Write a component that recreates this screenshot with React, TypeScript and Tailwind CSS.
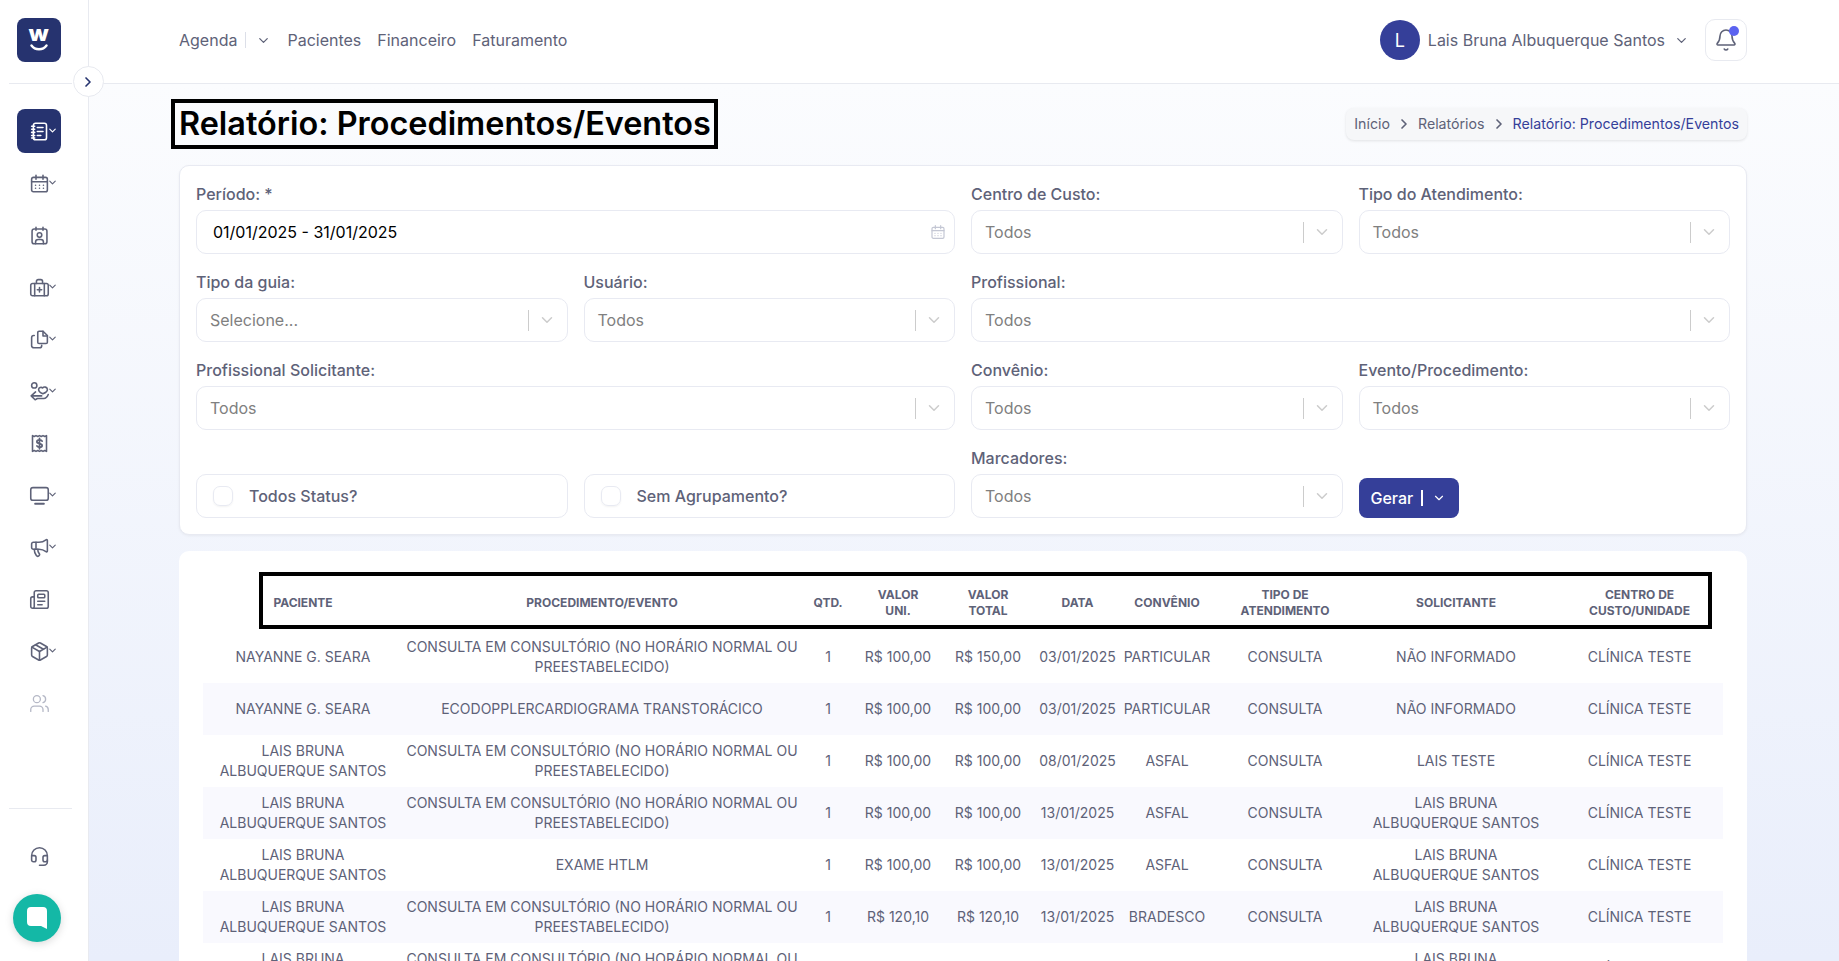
import { ChevronDown, ChevronRight, Bell, Megaphone, Newspaper, Package, Users, Headset } from "lucide-react";

const font = "font-['Inter','Noto_Sans',sans-serif]";

type Row = [string, string, string, string, string, string, string, string, string, string];

const consulta = "CONSULTA EM CONSULTÓRIO (NO HORÁRIO NORMAL OU PREESTABELECIDO)";
const lais = "LAIS BRUNA ALBUQUERQUE SANTOS";

const rows: Row[] = [
  ["NAYANNE G. SEARA", consulta, "1", "R$ 100,00", "R$ 150,00", "03/01/2025", "PARTICULAR", "CONSULTA", "NÃO INFORMADO", "CLÍNICA TESTE"],
  ["NAYANNE G. SEARA", "ECODOPPLERCARDIOGRAMA TRANSTORÁCICO", "1", "R$ 100,00", "R$ 100,00", "03/01/2025", "PARTICULAR", "CONSULTA", "NÃO INFORMADO", "CLÍNICA TESTE"],
  [lais, consulta, "1", "R$ 100,00", "R$ 100,00", "08/01/2025", "ASFAL", "CONSULTA", "LAIS TESTE", "CLÍNICA TESTE"],
  [lais, consulta, "1", "R$ 100,00", "R$ 100,00", "13/01/2025", "ASFAL", "CONSULTA", lais, "CLÍNICA TESTE"],
  [lais, "EXAME HTLM", "1", "R$ 100,00", "R$ 100,00", "13/01/2025", "ASFAL", "CONSULTA", lais, "CLÍNICA TESTE"],
  [lais, consulta, "1", "R$ 120,10", "R$ 120,10", "13/01/2025", "BRADESCO", "CONSULTA", lais, "CLÍNICA TESTE"],
  [lais, consulta, "1", "R$ 100,00", "R$ 100,00", "13/01/2025", "ASFAL", "CONSULTA", lais, "CLÍNICA TESTE"],
];

const headers = ["PACIENTE", "PROCEDIMENTO/EVENTO", "QTD.", "VALOR UNI.", "VALOR TOTAL", "DATA", "CONVÊNIO", "TIPO DE ATENDIMENTO", "SOLICITANTE", "CENTRO DE CUSTO/UNIDADE"];

// line icons of the sidebar, none of the packages has these exact shapes
function Svg({ size = 21, sw = 1.8, children }: { size?: number; sw?: number; children: React.ReactNode }) {
  return (
    <svg width={size} height={size} viewBox="0 0 24 24" fill="none" stroke="currentColor" strokeWidth={sw} strokeLinecap="round" strokeLinejoin="round">
      {children}
    </svg>
  );
}

const NotebookIcon = () => (
  <Svg>
    <rect x="5" y="2.5" width="15" height="19" rx="2.5" />
    <path d="M9.5 7.5h6.5M9.5 12h6.5M9.5 16.5h4M3 6h3.5M3 9.5h3.5M3 13h3.5M3 16.5h3.5M3 19.5h3.5" />
  </Svg>
);

const CalendarIcon = ({ size = 21 }: { size?: number }) => (
  <Svg size={size}>
    <rect x="3" y="5" width="18" height="16.5" rx="2" />
    <path d="M3 10h18M8 2.5V7M16 2.5V7M7.5 14h.01M12 14h.01M16.5 14h.01M7.5 17.5h.01M12 17.5h.01M16.5 17.5h.01" />
  </Svg>
);

const ContactIcon = () => (
  <Svg>
    <rect x="3.5" y="4.5" width="17" height="17" rx="2.5" />
    <path d="M8 2.5v3.5M16 2.5v3.5M7.5 21.5v-2a3 3 0 0 1 3-3h3a3 3 0 0 1 3 3v2" />
    <circle cx="12" cy="11.5" r="2.6" />
  </Svg>
);

const MedicalIcon = () => (
  <Svg>
    <rect x="2" y="7.5" width="20" height="14" rx="2" />
    <path d="M6.5 7.5v14M17.5 7.5v14M8.5 7.5V5a2 2 0 0 1 2-2h3a2 2 0 0 1 2 2v2.5M12 12v5M9.5 14.5h5" />
  </Svg>
);

const FilesIcon = () => (
  <Svg>
    <path d="M10 4a1.5 1.5 0 0 1 1.5-1.5H16l5 5V15a1.5 1.5 0 0 1-1.5 1.500h-8A1.500 1.500 0 0 1 10 15V4z" />
    <path d="M16 2.500V8h5M6 7.500H5.500A2.500 2.500 0 0 0 3 10v9a2.500 2.500 0 0 0 2.500 2.500H12a2.500 2.500 0 0 0 2.500-2.500v-.5" />
  </Svg>
);

const CareIcon = () => (
  <Svg>
    <circle cx="6" cy="5" r="3" />
    <path d="M15.500 8c1.500-1.800 5-1.200 5.500 1.200.4 2-1.500 3.900-5.200 5.300-2.600-1-4.800-2.700-4.800-4.800 0-2.200 3-3.200 4.500-1.700z" />
    <path d="M7.500 12.500 2.500 17l4.500 4.500 2.500-1.500h7.500c2 0 3.800-1.500 5-4.500M2.500 17h12" />
  </Svg>
);

const ReceiptIcon = () => (
  <Svg>
    <path d="M4 3l2 1 2-1 2 1 2-1 2 1 2-1 2 1 2-1v18l-2-1-2 1-2-1-2 1-2-1-2 1-2-1-2 1V3z" />
    <path d="M15 9.300c-.5-1-1.500-1.500-3-1.500-2 0-3 .9-3 2.100 0 2.900 6 1.500 6 4.400 0 1.200-1 2-3 2-1.500 0-2.500-.5-3-1.500M12 6v12" strokeWidth="2" />
  </Svg>
);

const MonitorIcon = () => (
  <Svg>
    <rect x="2" y="3" width="20" height="14.500" rx="2.500" />
    <path d="M7 21.500h10" strokeWidth="2.200" />
  </Svg>
);

function Select({ placeholder = "Todos" }: { placeholder?: string }) {
  return (
    <div className="flex h-11 items-center rounded-[10px] border border-[#e8eaf2] bg-white pl-[13px] pr-[10px]">
      <span className="flex-1 text-[16px] text-[#808080]">{placeholder}</span>
      <span className="h-[21px] w-px bg-[#cccccc]" />
      <ChevronDown size={18} strokeWidth={2} className="ml-[9px] mr-[1px] text-[#cccccc]" />
    </div>
  );
}

function Field({ label, className, children }: { label: string; className?: string; children: React.ReactNode }) {
  return (
    <div className={className}>
      <label className="mb-[5px] block h-[23px] pt-[2px] text-[16px] leading-[21px] font-medium text-[#5e6278]">{label}</label>
      {children}
    </div>
  );
}

function Check({ label }: { label: string }) {
  return (
    <div className="mt-7 flex h-11 items-center rounded-[10px] border border-[#e8eaf2] bg-white pl-4">
      <span className="h-[20px] w-[20px] rounded-[7px] border border-[#e8eaf2] shadow-[0_1px_2px_rgba(0,0,0,0.05)]" />
      <span className="ml-[16px] text-[16px] font-medium text-[#5e6278]">{label}</span>
    </div>
  );
}

function NavItem({ icon, chevron, active, muted }: { icon: React.ReactNode; chevron?: boolean; active?: boolean; muted?: boolean }) {
  return (
    <div className={`relative flex h-11 w-11 items-center justify-center rounded-lg ${active ? "bg-[#26336f] text-white" : muted ? "text-[#b5b8c6]" : "text-[#5e6278]"}`}>
      {icon}
      {chevron && <ChevronDown size={11} strokeWidth={2.5} className="absolute left-[30px] top-[16px]" />}
    </div>
  );
}

export default function App() {
  return (
    <div className={`flex h-[961px] overflow-hidden bg-white ${font}`}>
      {/* Sidebar */}
      <aside className="flex w-[89px] shrink-0 flex-col border-r border-[#e8eaf0] bg-white">
        <div className="flex h-[83px] items-start pl-[17px] pt-[18px]">
          <div className="flex h-11 w-11 flex-col items-center justify-center rounded-lg bg-[#26336f]">
            <span className="scale-x-[1.2] text-[16px] leading-[14px] font-black text-white">W</span>
            <svg width="20" height="8" viewBox="0 0 20 8" fill="none" className="mt-[2px]"><path d="M2.500 1.500c3.500 5 11.500 5 15 0" stroke="white" strokeWidth="2.400" strokeLinecap="round" /></svg>
          </div>
        </div>
        <div className="ml-[9px] mr-[16px] h-px bg-[#e8eaf0]" />
        <nav className="flex flex-col gap-2 pl-[17px] pt-[25px]">
          <NavItem active chevron icon={<NotebookIcon />} />
          <NavItem chevron icon={<CalendarIcon />} />
          <NavItem icon={<ContactIcon />} />
          <NavItem chevron icon={<MedicalIcon />} />
          <NavItem chevron icon={<FilesIcon />} />
          <NavItem chevron icon={<CareIcon />} />
          <NavItem icon={<ReceiptIcon />} />
          <NavItem chevron icon={<MonitorIcon />} />
          <NavItem chevron icon={<Megaphone size={21} strokeWidth={1.8} />} />
          <NavItem icon={<Newspaper size={21} strokeWidth={1.8} />} />
          <NavItem chevron icon={<Package size={21} strokeWidth={1.8} />} />
          <NavItem muted icon={<Users size={21} strokeWidth={1.5} />} />
        </nav>
        <div className="mt-auto ml-[9px] mr-[16px] h-px bg-[#e8eaf0]" />
        <div className="pl-[17px] pt-[25px]">
          <NavItem icon={<Headset size={21} strokeWidth={1.8} />} />
        </div>
        <div className="pb-[19px] pl-[13px] pt-[16px]">
          <div className="flex h-12 w-12 items-center justify-center rounded-full bg-[#14b8a6] shadow-[0_2px_8px_rgba(0,0,0,0.15)]">
            <svg width="22" height="24" viewBox="0 0 22 24" fill="white"><path d="M5 1h12a4 4 0 0 1 4 4v18l-6-3H5a4 4 0 0 1-4-4V5a4 4 0 0 1 4-4z" /></svg>
          </div>
        </div>
      </aside>

      <div className="flex min-w-0 flex-1 flex-col">
        {/* Header */}
        <header className="relative flex h-[84px] shrink-0 items-center justify-between border-b border-[#e8eaf0] bg-white pb-[3px] pl-[90px] pr-[92px] text-[16px] text-[#5e6278]">
          <button className="absolute -left-[16px] top-[66px] z-10 flex h-[31px] w-[31px] items-center justify-center rounded-full border border-[#e8eaf0] bg-white text-[#26336f]">
            <ChevronRight size={16} strokeWidth={2.5} className="-ml-px" />
          </button>
          <nav className="flex items-center">
            <span>Agenda</span>
            <span className="ml-2 h-[16px] w-px bg-[#dcdfe8]" />
            <ChevronDown size={15} className="ml-[10px]" />
            <span className="ml-[16px]">Pacientes</span>
            <span className="ml-4">Financeiro</span>
            <span className="ml-4">Faturamento</span>
          </nav>
          <div className="flex items-center">
            <div className="flex h-10 w-10 items-center justify-center rounded-full bg-[#353f99] text-[18px] text-white">L</div>
            <span className="ml-2">Lais Bruna Albuquerque Santos</span>
            <ChevronDown size={15} className="ml-[9px]" />
            <div className="relative ml-4 flex h-[42px] w-[42px] items-center justify-center rounded-[10px] border border-[#e8eaf0]">
              <Bell size={24} strokeWidth={1.6} />
              <span className="absolute right-[7px] top-[6px] h-[10px] w-[10px] rounded-full bg-[#5b63f0]" />
            </div>
          </div>
        </header>

        {/* Content */}
        <main className="min-h-0 flex-1 overflow-hidden bg-gradient-to-b from-[#fbfcfe] to-[#e9eefb] pl-[90px] pr-[92px]">
          <div className="flex h-[81px] items-center justify-between pb-[2px]">
            <h1 className="-ml-2 border-4 border-black pl-[4px] pr-[3px] text-[32.4px] leading-[42px] font-semibold text-black">Relatório: Procedimentos/Eventos</h1>
            <div className="flex h-8 items-center rounded-lg bg-[#f6f7f9] px-2 text-[14.2px] text-[#5e6278] shadow-[0_1px_3px_rgba(0,0,0,0.1)]">
              <span>Início</span>
              <ChevronRight size={16} strokeWidth={2.5} className="mx-[6px]" />
              <span>Relatórios</span>
              <ChevronRight size={16} strokeWidth={2.5} className="mx-[6px]" />
              <span className="text-[#353f99]">Relatório: Procedimentos/Eventos</span>
            </div>
          </div>

          <section className="grid grid-cols-4 gap-x-4 gap-y-4 rounded-[10px] border border-[#e8eaf2] bg-white p-4 shadow-[0_1px_3px_rgba(0,0,0,0.05)]">
            <Field label="Período: *" className="col-span-2">
              <div className="flex h-11 items-center rounded-[10px] border border-[#e8eaf2] pl-4 pr-[8px]">
                <span className="flex-1 text-[16px] text-black">01/01/2025 - 31/01/2025</span>
                <span className="text-[#c4c7d4]"><CalendarIcon size={16} /></span>
              </div>
            </Field>
            <Field label="Centro de Custo:"><Select /></Field>
            <Field label="Tipo do Atendimento:"><Select /></Field>

            <Field label="Tipo da guia:"><Select placeholder="Selecione..." /></Field>
            <Field label="Usuário:"><Select /></Field>
            <Field label="Profissional:" className="col-span-2"><Select /></Field>

            <Field label="Profissional Solicitante:" className="col-span-2"><Select /></Field>
            <Field label="Convênio:"><Select /></Field>
            <Field label="Evento/Procedimento:"><Select /></Field>

            <Check label="Todos Status?" />
            <Check label="Sem Agrupamento?" />
            <Field label="Marcadores:"><Select /></Field>
            <div className="flex items-end">
              <button className="flex h-10 w-[100px] items-center rounded-lg bg-[#353f99] pl-[12px] text-[16px] font-medium text-white">
                Gerar
                <span className="ml-[8px] h-[16px] w-[2px] bg-white" />
                <ChevronDown size={14} className="ml-[9px]" />
              </button>
            </div>
          </section>

          <section className="relative mt-4 rounded-t-[10px] bg-white px-6 pt-[24px]">
            <div className="pointer-events-none absolute left-[80px] right-[35px] top-[21px] h-[57px] border-4 border-black" />
            <table className="w-[1520px] table-fixed border-collapse text-center text-[14px] leading-5 text-[#5e6278]">
              <colgroup>
                <col className="w-[200px]" />
                <col className="w-[398px]" />
                <col className="w-[54px]" />
                <col className="w-[86px]" />
                <col className="w-[94px]" />
                <col className="w-[85px]" />
                <col className="w-[94px]" />
                <col className="w-[142px]" />
                <col className="w-[200px]" />
                <col className="w-[167px]" />
              </colgroup>
              <thead>
                <tr className="h-[56px] text-[12px] leading-4 font-bold">
                  {headers.map((h) => (
                    <th key={h} className="px-3 font-bold">{h}</th>
                  ))}
                </tr>
              </thead>
              <tbody>
                {rows.map((r, i) => (
                  <tr key={i} className={`h-[52px] ${i % 2 === 1 ? "bg-[#f9f9fe]" : ""}`}>
                    {r.map((c, j) => (
                      <td key={j} className={j === 0 || j === 8 ? "px-3 py-0" : "p-0"}>{c}</td>
                    ))}
                  </tr>
                ))}
              </tbody>
            </table>
          </section>
        </main>
      </div>
    </div>
  );
}
